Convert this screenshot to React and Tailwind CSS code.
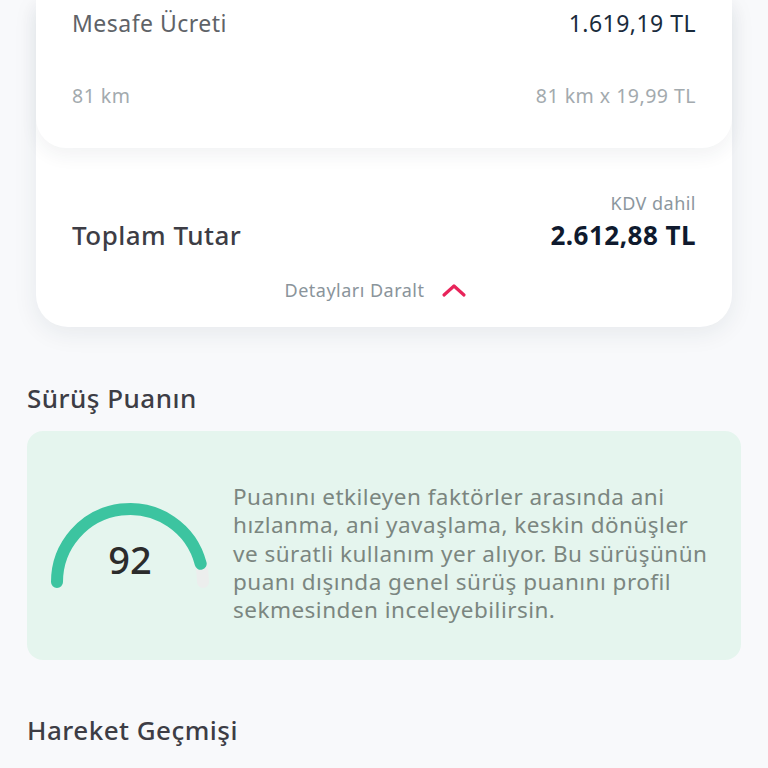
import React from "react";

function Gauge() {
  return (
    <div className="relative w-[180px] h-[100px] shrink-0">
      <svg width="180" height="100" viewBox="0 0 180 100" className="absolute left-0 top-0">
        <path d="M 159.7 61.8 A 73 73 0 0 1 162 80" fill="none" stroke="#eceeed" strokeWidth="12" strokeLinecap="round" />
        <path d="M 16 80 A 73 73 0 0 1 159.7 61.8" fill="none" stroke="#3cc4a0" strokeWidth="12" strokeLinecap="round" />
      </svg>
      <div className="absolute left-0 w-[178px] top-[35px] text-center text-[38px] leading-[44px] font-medium text-[#2b2b2b] tracking-normal">92</div>
    </div>
  );
}

export default function App() {
  return (
    <div
      className="min-h-[768px] w-[768px] bg-[#f8f9fb] overflow-hidden tracking-[0.03em]"
      style={{ fontFamily: '"Noto Sans", "Open Sans", sans-serif' }}
    >
      <div className="mx-[36px] bg-white rounded-b-[32px] shadow-[0_6px_24px_rgba(30,50,70,0.08)]">
        <div className="bg-white rounded-b-[30px] shadow-[0_8px_18px_rgba(30,50,70,0.06)] h-[148px] px-[36px] pt-[8px]">
          <div className="flex justify-between items-center h-[30px]">
            <span className="text-[23px] text-[#5f6368]">Mesafe Ücreti</span>
            <span className="text-[23px] text-[#1a2b3c]">1.619,19 TL</span>
          </div>
          <div className="flex justify-between items-center h-[30px] mt-[43px]">
            <span className="text-[19.5px] text-[#a3aaae]">81 km</span>
            <span className="text-[19.5px] text-[#a3aaae]">81 km x 19,99 TL</span>
          </div>
        </div>
        <div className="px-[36px] pt-[42px] pb-[23px]">
          <div className="flex justify-end text-[18px] leading-[26px] text-[#8c979e]">KDV dahil</div>
          <div className="flex justify-between items-center h-[34px] mt-[2px]">
            <span className="text-[26px] font-medium text-[#3d3d45]">Toplam Tutar</span>
            <span className="text-[26px] font-bold text-[#0f1a2e]">2.612,88 TL</span>
          </div>
          <div className="flex justify-center items-center gap-[17px] mt-[24px] h-[28px] pr-[16px]">
            <span className="text-[18px] text-[#8a949b]">Detayları Daralt</span>
            <svg width="26" height="16" viewBox="0 0 26 16">
              <path d="M 3 13 L 13 4 L 23 13" fill="none" stroke="#e8245a" strokeWidth="3.2" strokeLinecap="round" strokeLinejoin="round" />
            </svg>
          </div>
        </div>
      </div>

      <div className="px-[27px]">
        <div className="mt-[55px] text-[26px] leading-[32px] font-medium text-[#3d3d45]">Sürüş Puanın</div>
        <div className="mt-[17px] h-[229px] rounded-[16px] bg-[#e5f5ee] flex items-start pl-[14px]">
          <div className="mt-[71px]">
            <Gauge />
          </div>
          <div className="mt-[52px] ml-[12px] text-[22.5px] leading-[28.3px] text-[#7b8680] whitespace-nowrap">
            Puanını etkileyen faktörler arasında ani
            <br />
            hızlanma, ani yavaşlama, keskin dönüşler
            <br />
            ve süratli kullanım yer alıyor. Bu sürüşünün
            <br />
            puanı dışında genel sürüş puanını profil
            <br />
            sekmesinden inceleyebilirsin.
          </div>
        </div>
        <div className="mt-[54px] text-[26px] leading-[32px] font-medium text-[#3d3d45]">Hareket Geçmişi</div>
      </div>
    </div>
  );
}
